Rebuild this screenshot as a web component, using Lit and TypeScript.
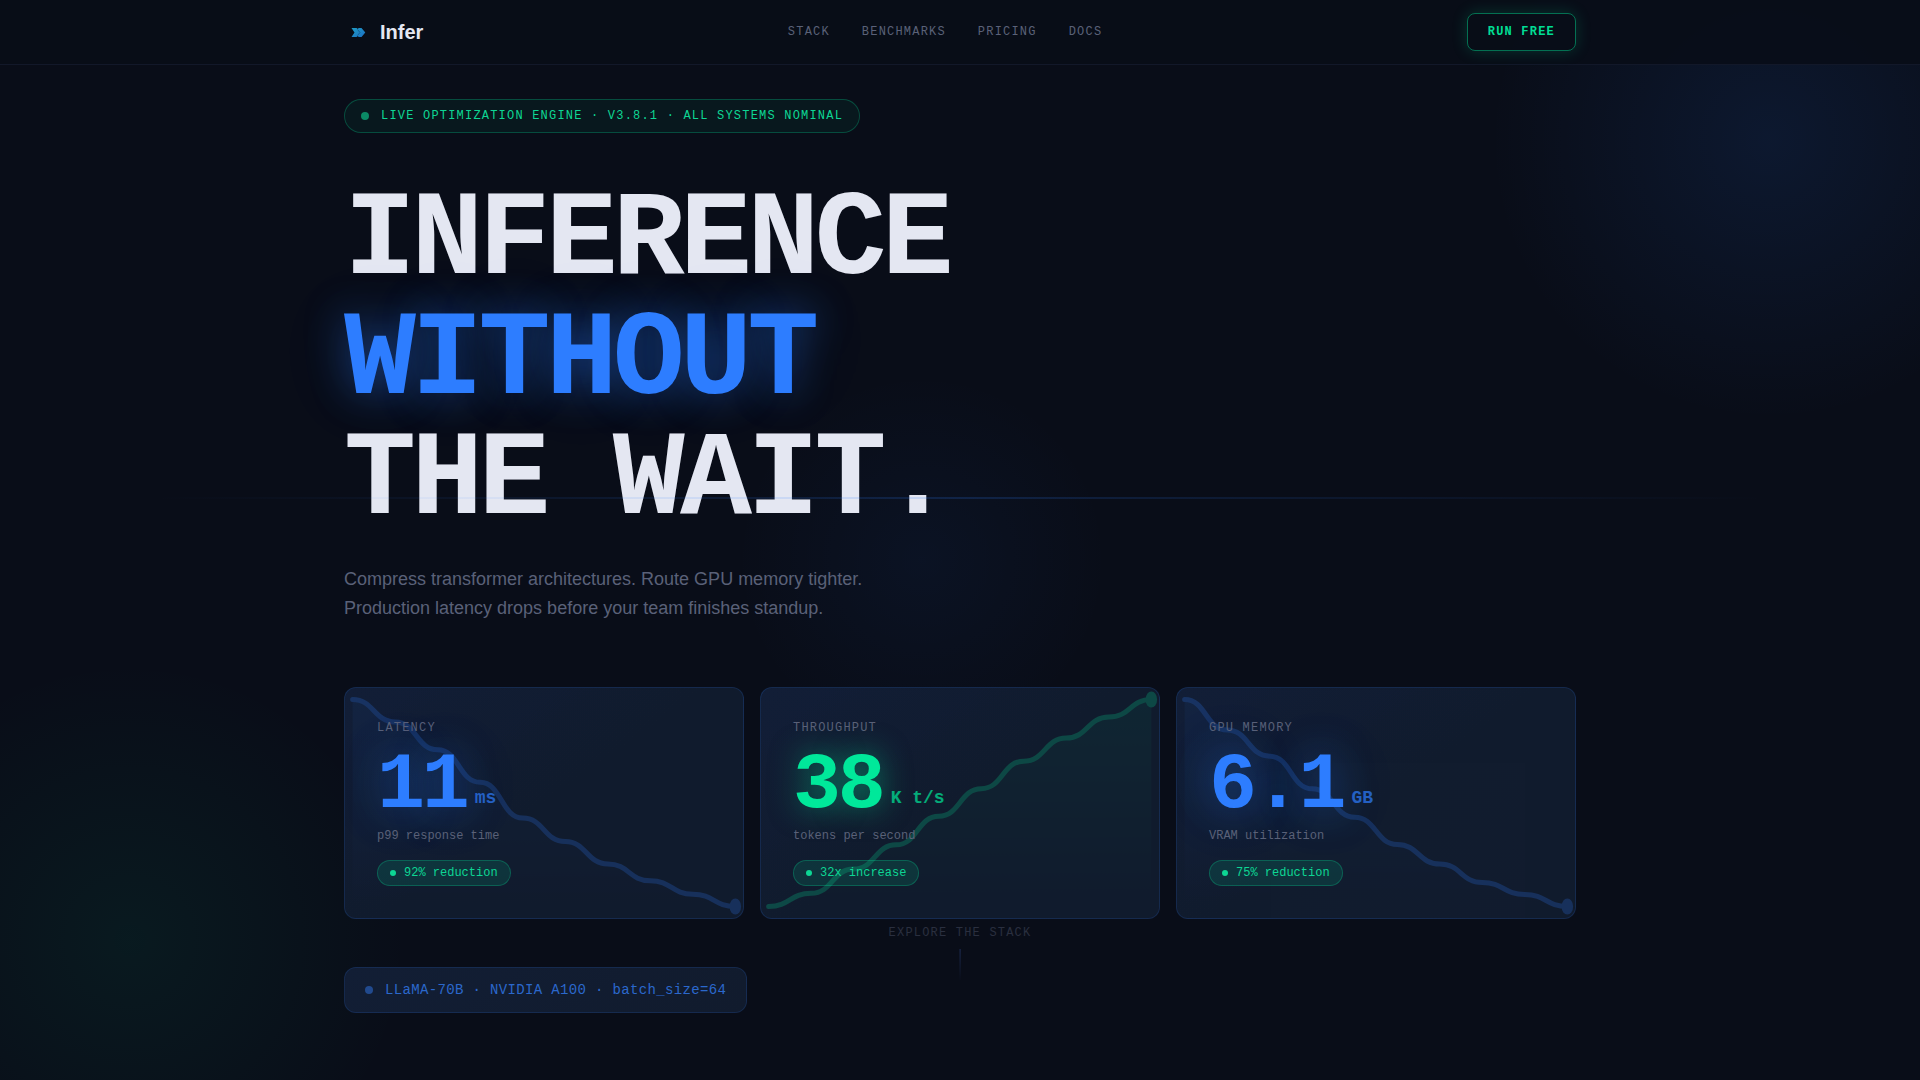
import { LitElement, html, svg, css } from "lit";
import { customElement, property } from "lit/decorators.js";

type Tone = "blue" | "green";

interface Metric {
  label: string;
  value: string;
  unit: string;
  note: string;
  change: string;
  tone: Tone;
  points: number[];
}

/* Heights are on a 0-100 scale, measured down from the top of the chart. */
const METRICS: Metric[] = [
  {
    label: "Latency", value: "11", unit: "ms", note: "p99 response time",
    change: "92% reduction", tone: "blue",
    points: [5, 15, 27.5, 42, 58, 68.5, 78.5, 86, 92, 97.5],
  },
  {
    label: "Throughput", value: "38", unit: "K t/s", note: "tokens per second",
    change: "32x increase", tone: "green",
    points: [95, 89, 78, 67, 54, 41.5, 29, 18.5, 9, 1],
  },
  {
    label: "GPU Memory", value: "6.1", unit: "GB", note: "VRAM utilization",
    change: "75% reduction", tone: "blue",
    points: [5, 19, 31, 46, 59, 71.5, 80.5, 89, 94.5, 100],
  },
];

@customElement("metric-card")
export class MetricCard extends LitElement {
  @property({ attribute: false }) metric!: Metric;

  static styles = css`
    :host {
      display: block;
      position: relative;
      overflow: hidden;
      box-sizing: border-box;
      padding: 32px;
      border: 1px solid rgba(45, 125, 255, 0.15);
      border-radius: 12px;
      background: linear-gradient(145deg, #121f38 0%, #111c2e 50%, #111b2e 100%);
      font-family: "Liberation Mono", monospace;
      font-size: 12px;
      line-height: 16px;
      color: #5a6178;
    }
    .chart {
      position: absolute;
      inset: 0;
      width: 100%;
      height: 100%;
    }
    .body {
      position: relative;
      display: flex;
      flex-direction: column;
      align-items: flex-start;
    }
    .label {
      margin: 0 0 10px;
      font-size: 12px;
      font-weight: 400;
      letter-spacing: 0.1em;
      text-transform: uppercase;
    }
    .figure {
      display: flex;
      align-items: flex-end;
      gap: 8px;
      margin: 0 0 2px;
      font-weight: 700;
    }
    .value {
      font-size: 80px;
      line-height: 80px;
      letter-spacing: -0.04em;
    }
    .unit {
      padding-bottom: 16px;
      font-size: 18px;
      line-height: 24px;
      opacity: 0.7;
    }
    .blue { color: #2d7dff; }
    .green { color: #00e89a; }
    .blue .value { text-shadow: 0 0 40px rgba(45, 125, 255, 0.4), 0 0 80px rgba(45, 125, 255, 0.15); }
    .green .value { text-shadow: 0 0 30px rgba(0, 232, 154, 0.5); }
    .note { margin: 0 0 16px; }
    .chip {
      display: inline-flex;
      align-items: center;
      gap: 8px;
      padding: 4px 12px;
      border: 1px solid rgba(0, 232, 154, 0.25);
      border-radius: 16px;
      background: rgba(0, 232, 154, 0.12);
      color: #0dd694;
    }
    .dot {
      width: 6px;
      height: 6px;
      border-radius: 50%;
      background: currentColor;
    }
  `;

  private linePath(points: number[]): string {
    const step = 100 / (points.length - 1);
    return points
      .map((y, i) => {
        const x = i * step;
        if (i === 0) return `M${x} ${y}`;
        const mid = x - step / 2;
        return `C${mid} ${points[i - 1]} ${mid} ${y} ${x} ${y}`;
      })
      .join(" ");
  }

  render() {
    const m = this.metric;
    const top = Math.min(...m.points);
    const span = Math.max(...m.points) - top;
    const pts = m.points.map((y) => ((y - top) / span) * 90);
    const stroke = m.tone === "blue" ? "#2d7dff" : "#00e89a";
    const line = this.linePath(pts);
    return html`
      <svg class="chart" viewBox="-2 -5 104 100" preserveAspectRatio="none" aria-hidden="true">
        <defs>
          <linearGradient id="fade" x1="0" y1="0" x2="0" y2="1">
            <stop offset="0" stop-color=${stroke} stop-opacity="0.25"></stop>
            <stop offset="1" stop-color=${stroke} stop-opacity="0"></stop>
          </linearGradient>
        </defs>
        ${svg`<g opacity="0.22">
          <path d="${line} L100 90 L0 90 Z" fill="url(#fade)"></path>
          <path d=${line} fill="none" stroke=${stroke} stroke-width="5" stroke-linecap="round" vector-effect="non-scaling-stroke"></path>
          <ellipse cx="100" cy=${pts[pts.length - 1]} rx="1.5" ry="3.5" fill=${stroke}></ellipse>
        </g>`}
      </svg>
      <div class="body">
        <h2 class="label">${m.label}</h2>
        <p class="figure ${m.tone}"><span class="value">${m.value}</span><span class="unit">${m.unit}</span></p>
        <p class="note">${m.note}</p>
        <span class="chip"><span class="dot"></span>${m.change}</span>
      </div>
    `;
  }
}

@customElement("app-root")
export class AppRoot extends LitElement {
  static styles = css`
    :host {
      display: block;
      position: relative;
      overflow: hidden;
      min-height: 100vh;
      background: #090d18;
      font-family: "Liberation Mono", monospace;
      font-size: 12px;
      line-height: 16px;
      color: #e4e7f2;
    }
    .glow {
      position: absolute;
      border-radius: 50%;
      pointer-events: none;
    }
    .glow-blue {
      top: -160px;
      right: -150px;
      width: 600px;
      height: 600px;
      background: radial-gradient(circle, rgba(45, 125, 255, 0.1) 0%, transparent 66%);
    }
    .glow-green {
      bottom: -160px;
      left: -170px;
      width: 600px;
      height: 600px;
      background: radial-gradient(circle, rgba(0, 232, 154, 0.06) 0%, transparent 66%);
    }
    .glow-mid {
      top: 50%;
      left: 48%;
      width: 400px;
      height: 400px;
      transform: translate(-50%, -45%);
      background: radial-gradient(circle, rgba(45, 125, 255, 0.05) 0%, transparent 66%);
    }
    .beam {
      position: absolute;
      top: 46%;
      left: 0;
      right: 0;
      height: 2px;
      background: linear-gradient(90deg, transparent 8%, rgba(45, 125, 255, 0.18) 50%, transparent 92%);
      pointer-events: none;
    }
    .bar {
      position: relative;
      border-bottom: 1px solid #121829;
      background: rgba(9, 13, 24, 0.92);
    }
    .wrap {
      box-sizing: border-box;
      max-width: 1280px;
      margin: 0 auto;
      padding: 0 24px;
    }
    .nav {
      display: flex;
      align-items: center;
      justify-content: space-between;
      height: 64px;
    }
    .brand {
      display: flex;
      align-items: center;
      gap: 8px;
      font: 700 20px/24px "Liberation Sans", sans-serif;
      color: #e4e7f2;
      text-decoration: none;
    }
    .links {
      display: flex;
      gap: 32px;
    }
    .link {
      letter-spacing: 0.1em;
      text-transform: uppercase;
      text-decoration: none;
      color: #5a6178;
    }
    .run {
      padding: 10px 20px;
      border: 1px solid rgba(0, 232, 154, 0.45);
      border-radius: 8px;
      background: transparent;
      box-shadow: 0 0 16px rgba(0, 232, 154, 0.18);
      font: 700 12px/16px "Liberation Mono", monospace;
      letter-spacing: 0.1em;
      text-transform: uppercase;
      color: #00dd94;
    }
    .hero {
      position: relative;
      padding-top: 34px;
      padding-bottom: 64px;
    }
    .status {
      display: inline-flex;
      align-items: center;
      gap: 12px;
      padding: 8px 16px;
      border: 1px solid rgba(0, 232, 154, 0.25);
      border-radius: 17px;
      background: rgba(0, 232, 154, 0.05);
      letter-spacing: 0.1em;
      text-transform: uppercase;
      color: #0dd694;
    }
    .dot {
      width: 8px;
      height: 8px;
      border-radius: 50%;
      background: currentColor;
      opacity: 0.6;
    }
    .title {
      margin: 48px 0 24px;
      font-size: 120px;
      font-weight: 700;
      line-height: 120px;
      letter-spacing: -0.04em;
    }
    .line { display: block; }
    .accent {
      color: #2d7dff;
      text-shadow: 0 0 40px rgba(45, 125, 255, 0.45), 0 0 80px rgba(45, 125, 255, 0.12);
    }
    .lead {
      max-width: 540px;
      margin: 0 0 64px;
      font: 400 18px/29px "Liberation Sans", sans-serif;
      color: #5a6178;
    }
    .cards {
      display: grid;
      grid-template-columns: repeat(3, 1fr);
      gap: 16px;
      margin-bottom: 48px;
    }
    .model {
      display: inline-flex;
      align-items: center;
      gap: 12px;
      padding: 12px 20px;
      border: 1px solid rgba(45, 125, 255, 0.15);
      border-radius: 12px;
      background: linear-gradient(145deg, #121e35, #111b2d);
      font-size: 14px;
      line-height: 20px;
      letter-spacing: 0.025em;
      color: #2b68cc;
    }
    .explore {
      position: absolute;
      bottom: 99px;
      left: 50%;
      transform: translateX(-50%);
      display: flex;
      flex-direction: column;
      align-items: center;
      gap: 8px;
      letter-spacing: 0.1em;
      text-transform: uppercase;
      text-decoration: none;
      white-space: nowrap;
      color: #2a2f3f;
    }
    .stem {
      width: 1px;
      height: 32px;
      background: linear-gradient(180deg, #1e2e58, transparent);
    }
  `;

  render() {
    return html`
      <div class="glow glow-blue"></div>
      <div class="glow glow-green"></div>
      <div class="glow glow-mid"></div>
      <header class="bar">
        <div class="wrap nav">
          <a class="brand" href="#">
            <svg width="28" height="28" viewBox="0 0 28 28" aria-hidden="true">
              <defs>
                <linearGradient id="mark" x1="0" y1="0" x2="1" y2="1">
                  <stop offset="0" stop-color="#1f9bc4"></stop>
                  <stop offset="1" stop-color="#1b6fc4"></stop>
                </linearGradient>
              </defs>
              <path d="M7.5 10H12.5L14 11L14.5 10H17.5L21.3 14.5L17.5 19H14.5L14 18L12.5 19H7.5L10.5 14.5Z" fill="url(#mark)"></path>
              <path d="M13.5 11.5L16 14.5L13.5 17.5" fill="none" stroke="#155f94" stroke-width="1"></path>
            </svg>
            Infer
          </a>
          <nav class="links">
            ${["Stack", "Benchmarks", "Pricing", "Docs"].map(
              (name) => html`<a class="link" href="#${name.toLowerCase()}">${name}</a>`,
            )}
          </nav>
          <button class="run" type="button">Run free</button>
        </div>
      </header>
      <main class="wrap hero">
        <div class="status"><span class="dot"></span>Live optimization engine · v3.8.1 · All systems nominal</div>
        <h1 class="title">
          <span class="line">INFERENCE</span>
          <span class="line accent">WITHOUT</span>
          <span class="line">THE WAIT.</span>
        </h1>
        <p class="lead">
          Compress transformer architectures. Route GPU memory tighter. Production latency drops before your team
          finishes standup.
        </p>
        <section class="cards">
          ${METRICS.map((m) => html`<metric-card .metric=${m}></metric-card>`)}
        </section>
        <div class="model"><span class="dot"></span>LLaMA-70B · NVIDIA A100 · batch_size=64</div>
      </main>
      <a class="explore" href="#stack">Explore the stack<span class="stem"></span></a>
      <div class="beam"></div>
    `;
  }
}
